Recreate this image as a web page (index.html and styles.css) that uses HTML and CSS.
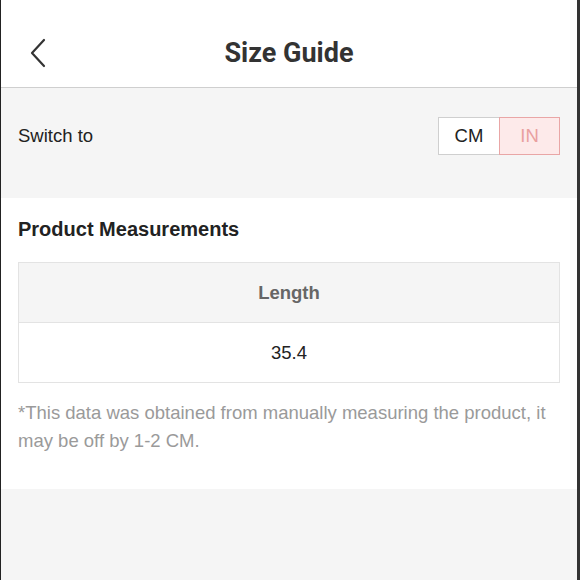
FILE: index.html
```html
<!DOCTYPE html>
<html lang="en">
<head>
<meta charset="utf-8">
<title>Size Guide</title>
<link rel="stylesheet" href="styles.css">
</head>
<body>
<div class="frame">
  <header class="topbar">
    <span class="back" aria-label="Back">
      <svg width="16" height="30" viewBox="0 0 16 30"><path d="M14 2 L2 15 L14 28" fill="none" stroke="#333" stroke-width="2.2" stroke-linecap="round" stroke-linejoin="round"/></svg>
    </span>
    <h1 class="title">Size Guide</h1>
  </header>
  <section class="switch">
    <span class="switch-label">Switch to</span>
    <div class="toggle">
      <span class="opt">CM</span>
      <span class="opt active">IN</span>
    </div>
  </section>
  <section class="measure">
    <h2 class="measure-title">Product Measurements</h2>
    <div class="table">
      <div class="th">Length</div>
      <div class="td">35.4</div>
    </div>
    <p class="note">*This data was obtained from manually measuring the product, it may be off by 1-2 CM.</p>
  </section>
  <div class="rest"></div>
</div>
</body>
</html>
```
FILE: styles.css
```css
html, body {
  margin: 0;
  padding: 0;
  height: 580px;
  overflow: hidden;
}
body {
  font-family: "Liberation Sans", Arial, sans-serif;
  color: #222;
}
.frame {
  height: 580px;
  display: flex;
  flex-direction: column;
  border-left: 1px solid #222;
  border-right: 3px solid #333;
  box-sizing: border-box;
  background: #f5f5f5;
}
.topbar {
  height: 88px;
  flex: none;
  background: #fff;
  border-bottom: 1px solid #cfcfcf;
  display: flex;
  align-items: center;
  justify-content: center;
  position: relative;
  padding-top: 18px;
  box-sizing: border-box;
}
.back {
  position: absolute;
  left: 29px;
  top: 38px;
  display: flex;
}
.title {
  margin: 0;
  font-family: Roboto, "Liberation Sans", sans-serif;
  font-weight: 700;
  font-size: 27px;
  color: #333;
}
.switch {
  height: 110px;
  flex: none;
  display: flex;
  align-items: flex-start;
  justify-content: space-between;
  padding: 29px 17px 0 17px;
  box-sizing: border-box;
}
.switch-label {
  font-size: 18.5px;
  line-height: 38px;
  color: #222;
}
.toggle {
  display: flex;
  height: 38px;
}
.opt {
  width: 62px;
  display: flex;
  align-items: center;
  justify-content: center;
  font-size: 18.5px;
  background: #fff;
  border: 1px solid #cfcfcf;
  color: #222;
  box-sizing: border-box;
}
.opt.active {
  margin-left: -1px;
  width: 61px;
  background: #fdeaea;
  border: 1px solid #e9a6a6;
  color: #e9a0a0;
}
.measure {
  background: #fff;
  flex: none;
  padding: 19px 17px 0 17px;
  height: 291px;
  box-sizing: border-box;
}
.measure-title {
  margin: 0;
  font-size: 20px;
  font-weight: 700;
  line-height: 24px;
  color: #222;
}
.table {
  margin-top: 21px;
  border: 1px solid #e3e3e3;
}
.th {
  height: 59px;
  background: #f5f5f5;
  border-bottom: 1px solid #e3e3e3;
  display: flex;
  align-items: center;
  justify-content: center;
  font-size: 18.5px;
  font-weight: 700;
  color: #666;
}
.td {
  height: 59px;
  display: flex;
  align-items: center;
  justify-content: center;
  font-size: 18.5px;
  color: #222;
}
.note {
  margin: 16px 0 0;
  font-size: 18.5px;
  line-height: 28px;
  color: #9a9a9a;
}
.rest {
  flex: 1;
}
```
